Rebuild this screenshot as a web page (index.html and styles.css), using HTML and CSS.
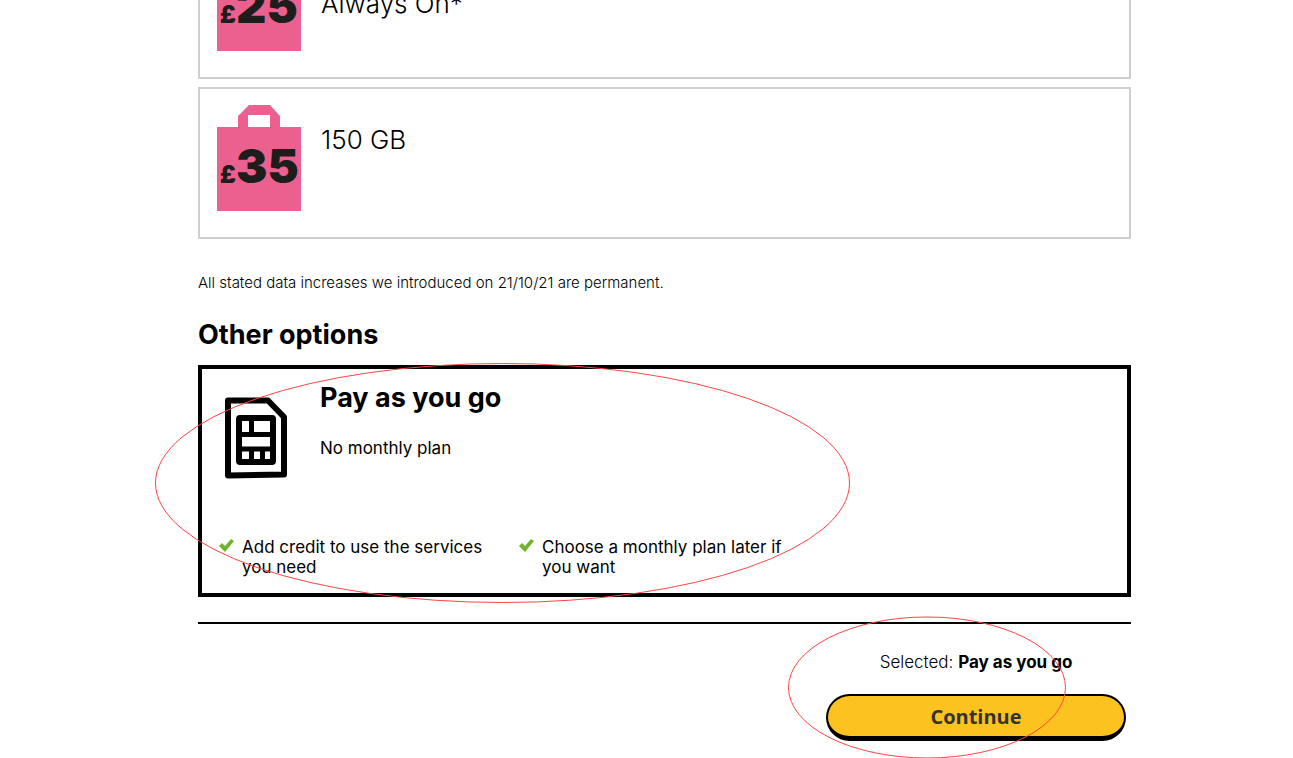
FILE: index.html
```html
<!DOCTYPE html>
<html lang="en">
<head>
	<meta charset="UTF-8">
	<meta name="viewport" content="width=device-width,initial-scale=1">
	<title>Choose your plan</title>
	<link rel="stylesheet" href="styles.css">
</head>
<body>
	<form class="page">
		<label class="plan plan-first">
			<input type="radio" name="plan" value="25" class="radio">
			<svg class="bag" width="84" height="106" viewBox="0 0 84 106">
				<path d="M0 22H21V11L32 0H53L63 11V22H84V106H0ZM31 10V22H53V10Z" fill="#eb608f" fill-rule="evenodd"/>
				<text x="3" y="78" class="pound">£</text>
				<text x="19" y="78" class="price">25</text>
			</svg>
			<span class="data data-low">Always On*</span>
		</label>
		<label class="plan">
			<input type="radio" name="plan" value="35" class="radio">
			<svg class="bag" width="84" height="106" viewBox="0 0 84 106">
				<path d="M0 22H21V11L32 0H53L63 11V22H84V106H0ZM31 10V22H53V10Z" fill="#eb608f" fill-rule="evenodd"/>
				<text x="3" y="78" class="pound">£</text>
				<text x="19" y="78" class="price">35</text>
			</svg>
			<span class="data">150 GB</span>
		</label>

		<p class="note">All stated data increases we introduced on 21/10/21 are permanent.</p>

		<h2 class="title">Other options</h2>
		<label class="option">
			<input type="radio" name="plan" value="payg" class="radio" checked>
			<span class="option-top">
				<svg class="sim" width="62" height="82" viewBox="0 0 62 82">
					<path d="M3 3.500H43L59 20V77.500L3 78.500Z" fill="none" stroke="#000" stroke-width="6" stroke-linejoin="round"/>
					<rect x="14" y="21" width="34" height="44" rx="1" fill="none" stroke="#000" stroke-width="6"/>
					<path d="M14 37.500H48M14 52H48M26.500 21V37M26.500 52V65M37.500 52V65" fill="none" stroke="#000" stroke-width="5"/>
				</svg>
				<span class="option-text">
					<strong class="option-name">Pay as you go</strong>
					<span class="option-plan">No monthly plan</span>
				</span>
			</span>
			<span class="features">
				<span class="feature">
					<svg class="tick" width="15" height="13" viewBox="0 0 15 13"><path d="M0 7L3 4L6 7L12 0L15 2L6 13Z" fill="#6fb52c"/></svg>
					<span>Add credit to use the services you need</span>
				</span>
				<span class="feature">
					<svg class="tick" width="15" height="13" viewBox="0 0 15 13"><path d="M0 7L3 4L6 7L12 0L15 2L6 13Z" fill="#6fb52c"/></svg>
					<span>Choose a monthly plan later if you want</span>
				</span>
			</span>
		</label>

		<div class="footer">
			<div class="summary">
				<p class="selected">Selected: <b>Pay as you go</b></p>
				<button type="button" class="continue">Continue</button>
			</div>
		</div>

		<!-- hand-drawn rings over the option and the button -->
		<svg class="ring ring-option" width="696" height="241" viewBox="0 0 696 241"><ellipse cx="347.500" cy="120" rx="347" ry="119.500"/></svg>
		<svg class="ring ring-button" width="278" height="142" viewBox="0 0 278 142"><ellipse cx="139" cy="71.500" rx="138.500" ry="70.500"/></svg>
	</form>
</body>
</html>
```
FILE: styles.css
```css
*{
	box-sizing: border-box;
}
body{
	margin: 0;
	background: #fff;
	color: #000;
	font-family: Inter, "Liberation Sans", sans-serif;
	font-size: 17px;
	line-height: 20px;
}
.page{
	position: relative;
	margin: 0 162px 0 198px;
}
.radio{
	position: absolute;
	opacity: 0;
}
.plan{
	display: flex;
	gap: 20px;
	min-height: 152px;
	margin-bottom: 8px;
	padding: 16px 17px;
	border: 2px solid #cfcfcf;
}
/* the list is scrolled part of the way past the first plan */
.plan-first{
	margin-top: -73px;
}
.bag{
	flex: none;
}
.pound,.price{
	fill: #1d1d1b;
	font-weight: 900;
}
.pound{
	font-size: 24px;
}
.price{
	font-size: 47px;
}
.data{
	padding-top: 20px;
	font-size: 26px;
	font-weight: 300;
	line-height: 30px;
}
.data-low{
	padding-top: 44px;
}
.note{
	margin: 34px 0 0;
	font-size: 15px;
	font-weight: 300;
}
.title{
	margin: 27px 0 15px;
	font-size: 27px;
	line-height: 30px;
}
.option{
	display: block;
	padding: 14px 17px 16px;
	border: 4px solid #000;
}
.option-top{
	display: flex;
	gap: 33px;
	min-height: 154px;
	padding-left: 6px;
}
.sim{
	flex: none;
	margin-top: 14px;
}
.option-text{
	display: flex;
	flex-direction: column;
	gap: 25px;
}
.option-name{
	font-size: 27px;
	font-weight: 700;
	line-height: 30px;
}
.features{
	display: flex;
	gap: 32px;
}
.feature{
	display: flex;
	gap: 8px;
	width: 268px;
}
.tick{
	flex: none;
	margin-top: 2px;
}
.footer{
	display: flex;
	justify-content: flex-end;
	margin-top: 25px;
	padding: 28px 5px 17px 0;
	border-top: 2px solid #000;
}
.summary{
	width: 300px;
	text-align: center;
}
.selected{
	margin: 0 0 22px;
	font-weight: 300;
}
.selected b{
	font-weight: 700;
}
.continue{
	width: 100%;
	height: 47px;
	padding: 0;
	border: 2px solid #000;
	border-bottom-width: 5px;
	border-radius: 24px;
	background: #fcc21f;
	color: #333;
	font-family: "Open Sans", "Noto Sans", sans-serif;
	font-size: 20px;
	font-weight: 700;
}
.ring{
	position: absolute;
	fill: none;
	stroke: #f44;
	stroke-width: 1px;
	pointer-events: none;
}
.ring-option{
	left: -43px;
	top: 436px;
}
.ring-button{
	right: 65px;
	bottom: 0;
}
```
